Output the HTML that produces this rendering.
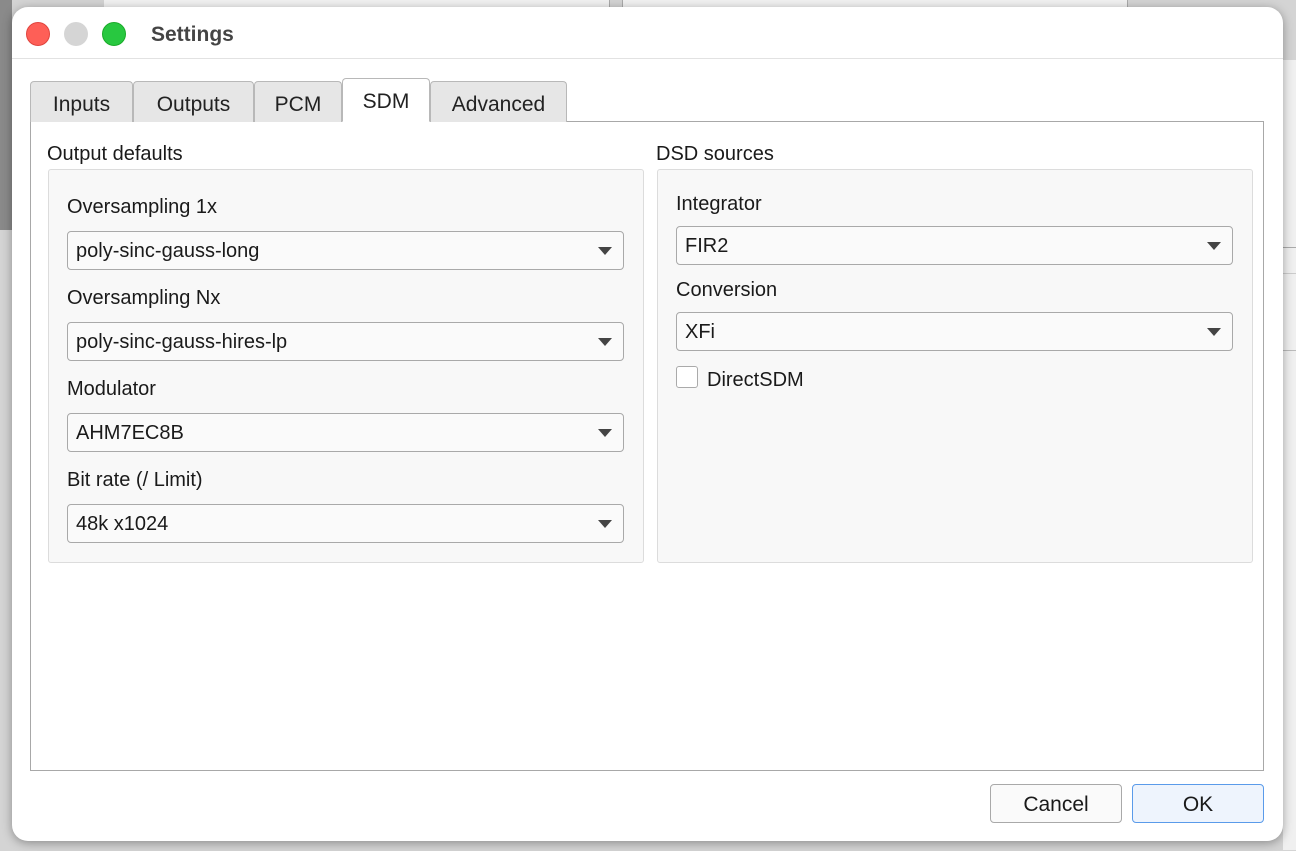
<!DOCTYPE html>
<html><head><style>
*{box-sizing:border-box;margin:0;padding:0}
body{width:1296px;height:851px;background:#d4d4d4;position:relative;overflow:hidden;font-family:"Liberation Sans",sans-serif;color:#1a1a1a}
.abs{position:absolute}
.win{left:12px;top:7px;width:1271px;height:834px;background:#fff;border-radius:16px;box-shadow:0 2px 10px rgba(0,0,0,.35)}
.dot{width:24px;height:24px;border-radius:50%;top:22px}
.tab{top:81px;height:41px;background:#e6e6e6;border:1px solid #b8b8b8;border-bottom:none;border-radius:4px 4px 0 0;font-size:21px;text-align:center;line-height:46px;color:#222}
.pane{left:30px;top:121px;width:1234px;height:650px;border:1px solid #a8a8a8;background:#fff}
.grp{border:1px solid #dcdcdc;background:#f8f8f8;border-radius:3px}
.lbl{font-size:20px}
.cb{height:39px;border:1px solid #a9a9a9;border-radius:4px;background:#fafafa;font-size:20px;line-height:39px;padding-left:8px}
.cb:after{content:"";position:absolute;right:11px;top:15px;border-left:7px solid transparent;border-right:7px solid transparent;border-top:8px solid #444}
.btn{top:784px;height:39px;border:1px solid #a9a9a9;border-radius:4px;background:#fafafa;font-size:21px;text-align:center;line-height:40px}
</style></head><body>
<div class="abs" style="left:0;top:0;width:12px;height:230px;background:#8a8a8a"></div>
<div class="abs" style="left:104px;top:0;width:506px;height:7px;background:#f2f2f2;border-right:1px solid #aaa"></div>
<div class="abs" style="left:622px;top:0;width:506px;height:7px;background:#f2f2f2;border-left:1px solid #aaa;border-right:1px solid #aaa"></div>
<div class="abs" style="left:1283px;top:60px;width:13px;height:790px;background:#f0f0f0"></div>
<div class="abs" style="left:1283px;top:247px;width:13px;height:1px;background:#aaa"></div>
<div class="abs" style="left:1283px;top:273px;width:13px;height:1px;background:#ccc"></div>
<div class="abs" style="left:1283px;top:350px;width:13px;height:1px;background:#bbb"></div>
<div class="abs win"></div>
<div class="abs dot" style="left:26px;background:#fe5f57;border:1px solid #e0443e"></div>
<div class="abs dot" style="left:64px;background:#d5d5d5"></div>
<div class="abs dot" style="left:102px;background:#28c840;border:1px solid #1aab29"></div>
<div class="abs" style="left:151px;top:23px;font-size:21px;font-weight:bold;color:#444">Settings</div>
<div class="abs" style="left:12px;top:58px;width:1271px;height:1px;background:#e2e2e2"></div>
<div class="abs pane"></div>
<div class="abs tab" style="left:30px;width:103px">Inputs</div>
<div class="abs tab" style="left:133px;width:121px">Outputs</div>
<div class="abs tab" style="left:254px;width:88px">PCM</div>
<div class="abs tab" style="left:342px;width:88px;top:78px;height:44px;background:#fff;line-height:46px;border-bottom:1px solid #fff">SDM</div>
<div class="abs tab" style="left:430px;width:137px">Advanced</div>

<div class="abs lbl" style="left:47px;top:143px">Output defaults</div>
<div class="abs grp" style="left:48px;top:169px;width:596px;height:394px"></div>
<div class="abs lbl" style="left:67px;top:196px">Oversampling 1x</div>
<div class="abs cb" style="left:67px;top:231px;width:557px">poly-sinc-gauss-long</div>
<div class="abs lbl" style="left:67px;top:287px">Oversampling Nx</div>
<div class="abs cb" style="left:67px;top:322px;width:557px">poly-sinc-gauss-hires-lp</div>
<div class="abs lbl" style="left:67px;top:378px">Modulator</div>
<div class="abs cb" style="left:67px;top:413px;width:557px">AHM7EC8B</div>
<div class="abs lbl" style="left:67px;top:469px">Bit rate (/ Limit)</div>
<div class="abs cb" style="left:67px;top:504px;width:557px">48k x1024</div>

<div class="abs lbl" style="left:656px;top:143px">DSD sources</div>
<div class="abs grp" style="left:657px;top:169px;width:596px;height:394px"></div>
<div class="abs lbl" style="left:676px;top:193px">Integrator</div>
<div class="abs cb" style="left:676px;top:226px;width:557px">FIR2</div>
<div class="abs lbl" style="left:676px;top:279px">Conversion</div>
<div class="abs cb" style="left:676px;top:312px;width:557px">XFi</div>
<div class="abs" style="left:676px;top:366px;width:22px;height:22px;border:1px solid #aaa;border-radius:3px;background:#fff"></div>
<div class="abs lbl" style="left:707px;top:369px">DirectSDM</div>

<div class="abs btn" style="left:990px;width:132px">Cancel</div>
<div class="abs btn" style="left:1132px;width:132px;border-color:#5a9bea;background:#eef4fd">OK</div>
</body></html>
